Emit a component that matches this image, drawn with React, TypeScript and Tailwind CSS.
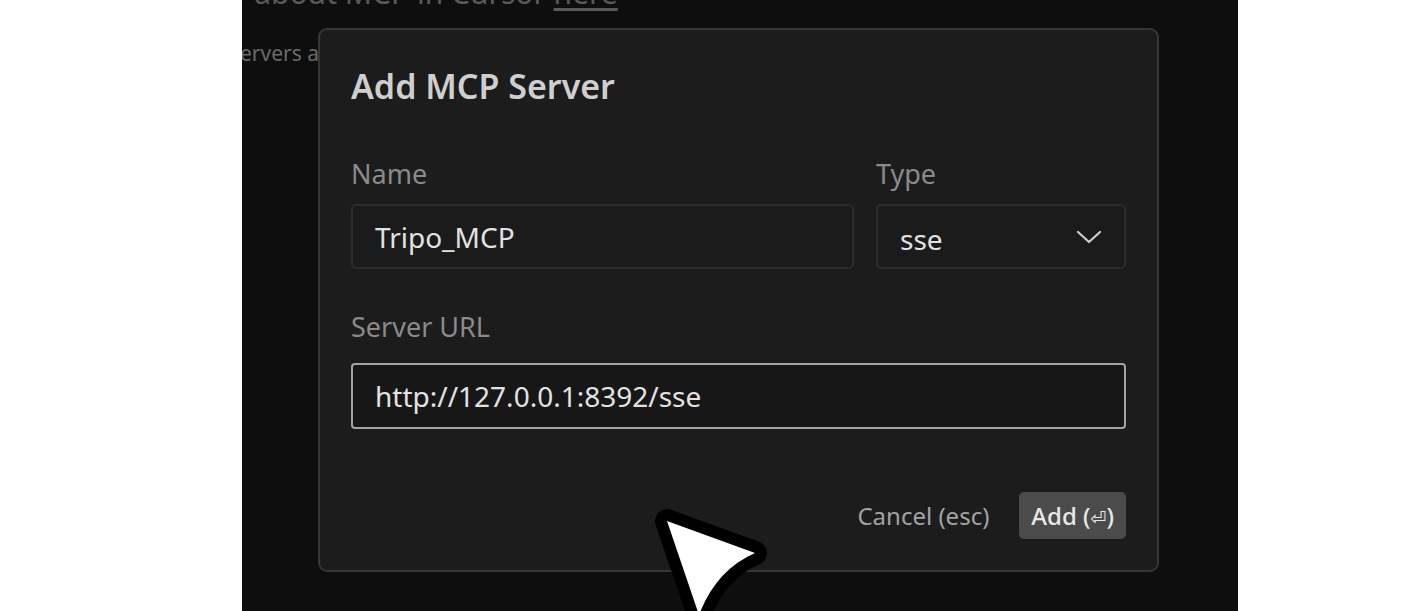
import React from "react";

function Chevron() {
  return (
    <svg width="26" height="14" viewBox="0 0 26 14" fill="none">
      <path d="M2 2 L13 12 L24 2" stroke="#cfcfcf" strokeWidth="2.2" strokeLinecap="round" strokeLinejoin="round" />
    </svg>
  );
}

function Pointer() {
  return (
    <svg
      className="absolute left-0 top-0 pointer-events-none"
      width="1415"
      height="611"
      viewBox="0 0 1415 611"
    >
      <path
        d="M667 521 L755 553 Q716 570 699 615 Z"
        fill="#ffffff"
        stroke="#000000"
        strokeWidth="24"
        strokeLinejoin="round"
        paintOrder="stroke"
      />
    </svg>
  );
}

export default function App() {
  const font = { fontFamily: '"Noto Sans", "Open Sans", sans-serif' };
  return (
    <div className="relative flex h-[611px] w-[1415px] overflow-hidden bg-white" style={font}>
      <div className="ml-[242px] h-full w-[996px] relative overflow-hidden bg-[#0e0e0e]">
        {/* page text behind the dialog */}
        <div className="-mt-[25px] -ml-[8px] whitespace-nowrap text-[30px] leading-[36px] text-[#5a5a5a]">
          r about MCP in Cursor <span className="underline underline-offset-4">here</span>
        </div>
        <div className="mt-[27px] -ml-[2px] whitespace-nowrap text-[21px] leading-[30px] text-[#6a6a6a]">
          ervers are shown here
        </div>

        {/* dialog */}
        <div className="absolute left-[76px] top-[28px] flex h-[544px] w-[841px] flex-col rounded-[9px] border-2 border-[#363636] bg-[#1c1c1c] px-[31px] pt-[30px] pb-[31px]">
          <h2 className="text-[34px] font-semibold leading-[52px] text-[#cfcfcf]">Add MCP Server</h2>

          <div className="mt-[42px] flex gap-[22px]">
            <div className="flex w-[503px] flex-col">
              <label className="text-[27px] leading-[40px] text-[#8a8a8a]">Name</label>
              <div className="mt-[10px] flex h-[65px] items-center rounded-[5px] border-2 border-[#2c2c2c] bg-[#1b1b1b] px-[22px] text-[28px] text-[#e2e2e2]">
                Tripo_MCP
              </div>
            </div>
            <div className="flex flex-1 flex-col">
              <label className="text-[27px] leading-[40px] text-[#8a8a8a]">Type</label>
              <div className="mt-[10px] flex h-[65px] items-center justify-between rounded-[5px] border-2 border-[#2c2c2c] bg-[#1b1b1b] pl-[22px] pr-[22px] text-[28px] text-[#e2e2e2]">
                <span className="pt-[4px]">sse</span>
                <Chevron />
              </div>
            </div>
          </div>

          <label className="mt-[38px] text-[27px] leading-[40px] text-[#8a8a8a]">Server URL</label>
          <div className="mt-[16px] flex h-[66px] items-center rounded-[4px] border-2 border-[#a3a3a3] bg-[#171717] px-[22px] text-[28px] text-[#e2e2e2]">
            http://127.0.0.1:8392/sse
          </div>

          <div className="mt-auto flex items-center justify-end gap-[30px]">
            <span className="text-[24px] text-[#a2a2a2]">Cancel (esc)</span>
            <button className="h-[47px] rounded-[5px] bg-[#4b4b4b] px-[12px] text-[24px] font-medium text-[#e8e8e8]">
              Add (<span style={{ fontFamily: '"DejaVu Sans", sans-serif' }} className="text-[19px]">⏎</span>)
            </button>
          </div>
        </div>
      </div>
      <Pointer />
    </div>
  );
}
